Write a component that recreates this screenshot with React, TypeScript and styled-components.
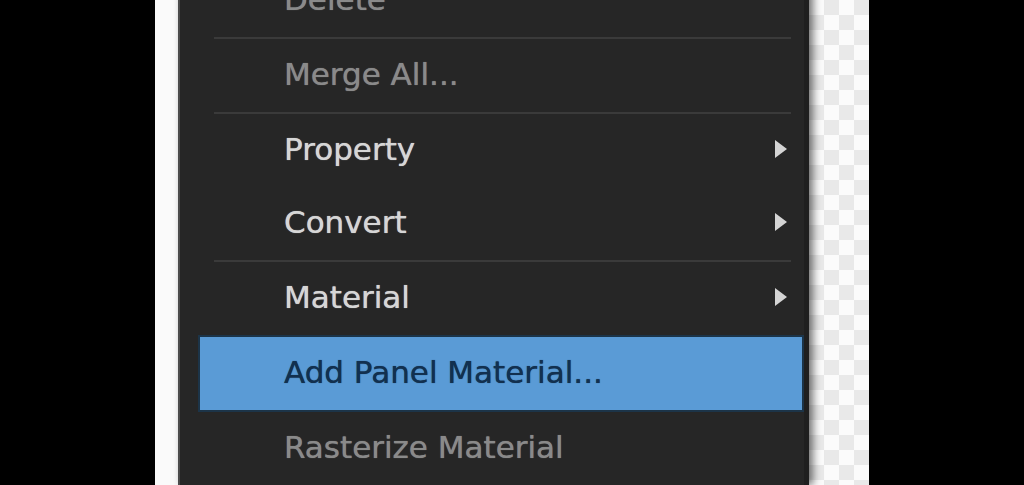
import React from "react";
import styled, { createGlobalStyle } from "styled-components";

const Global = createGlobalStyle`
  html, body { margin: 0; padding: 0; background: #000; overflow: hidden; }
  body { font-family: "DejaVu Sans", Verdana, sans-serif; }
`;

const Stage = styled.div`
  display: flex;
  height: 485px;
  width: 1024px;
  padding-left: 155px;
  box-sizing: border-box;
  background: #000;
  overflow: hidden;
`;

const CanvasEdge = styled.div`
  width: 23px;
  background: #fafafa;
  flex: none;
`;

const Menu = styled.div`
  position: relative;
  z-index: 1;
  width: 631px;
  flex: none;
  box-sizing: border-box;
  background: #262626;
  border-left: 2px solid #4a4a4a;
  border-right: 5px solid #1f1f1f;
  padding-left: 18px;
  margin-top: -36px;
  box-shadow: 4px 0 8px rgba(0, 0, 0, 0.55);
  display: flex;
  flex-direction: column;
`;

const Checker = styled.div`
  width: 60px;
  flex: none;
  background-color: #fbfbfb;
  background-image: conic-gradient(#e9e9e9 25%, transparent 0 50%, #e9e9e9 0 75%, transparent 0);
  background-size: 30px 30px;
`;

const Item = styled.div<{ $state: "disabled" | "enabled" | "active" }>`
  display: flex;
  align-items: center;
  justify-content: space-between;
  height: ${(p) => (p.$state === "active" ? "77px" : "73px")};
  box-sizing: border-box;
  padding: 0 16px 4px 86px;
  font-size: 31px;
  white-space: nowrap;
  text-shadow: 0 0 0.8px currentColor;
  color: ${(p) =>
    p.$state === "disabled" ? "#8a8a8a" : p.$state === "active" ? "#12304f" : "#d6d6d6"};
  background: ${(p) => (p.$state === "active" ? "#5a9bd6" : "transparent")};
  border: ${(p) => (p.$state === "active" ? "2px solid #1c3448" : "none")};
  ${(p) => (p.$state === "active" ? "padding-left: 84px;" : "")}
`;

const Separator = styled.div`
  height: 2px;
  margin: 0 13px 0 16px;
  background: #3a3a3a;
  flex: none;
`;

const Arrow = () => (
  <svg width="14" height="20" viewBox="0 0 14 20" aria-hidden>
    <path d="M1 1 L13 10 L1 19 Z" fill="#d4d4d4" />
  </svg>
);

type Entry =
  | { kind: "item"; label: string; state: "disabled" | "enabled" | "active"; sub?: boolean }
  | { kind: "sep" };

const entries: Entry[] = [
  { kind: "item", label: "Delete", state: "disabled" },
  { kind: "sep" },
  { kind: "item", label: "Merge All...", state: "disabled" },
  { kind: "sep" },
  { kind: "item", label: "Property", state: "enabled", sub: true },
  { kind: "item", label: "Convert", state: "enabled", sub: true },
  { kind: "sep" },
  { kind: "item", label: "Material", state: "enabled", sub: true },
  { kind: "item", label: "Add Panel Material...", state: "active" },
  { kind: "item", label: "Rasterize Material", state: "disabled" },
];

export default function App() {
  return (
    <>
      <Global />
      <Stage>
        <CanvasEdge />
        <Menu>
          {entries.map((e, i) =>
            e.kind === "sep" ? (
              <Separator key={i} />
            ) : (
              <Item key={i} $state={e.state}>
                <span>{e.label}</span>
                {e.sub && <Arrow />}
              </Item>
            )
          )}
        </Menu>
        <Checker />
      </Stage>
    </>
  );
}
